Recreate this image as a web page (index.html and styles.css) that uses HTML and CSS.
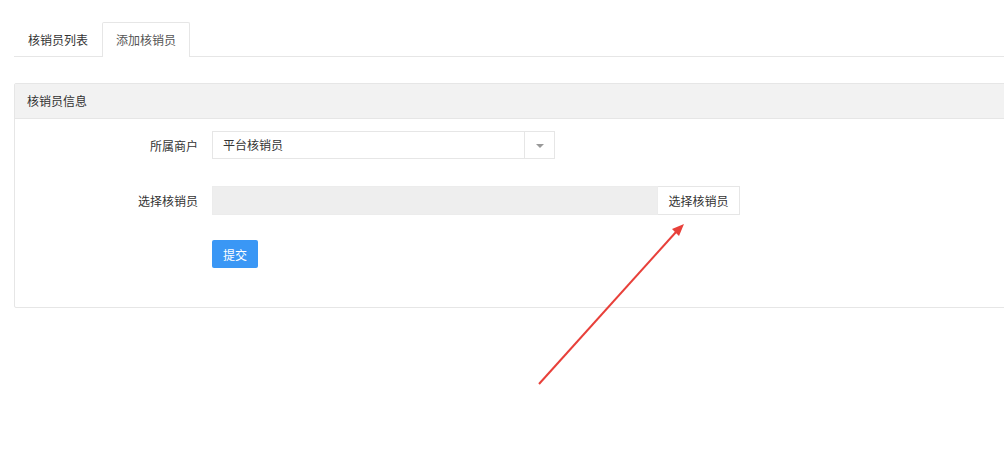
FILE: index.html
```html
<!DOCTYPE html>
<html lang="zh-CN">
<head>
    <meta charset="UTF-8">
    <meta name="viewport" content="width=device-width, initial-scale=1.0">
    <title>添加核销员</title>
    <link rel="stylesheet" href="styles.css">
</head>
<body>
    <div class="page">
        <ul class="tabs">
            <li class="tab">核销员列表</li>
            <li class="tab active">添加核销员</li>
        </ul>

        <div class="panel">
            <div class="panel-heading">核销员信息</div>
            <div class="panel-body">
                <div class="form-row">
                    <label class="form-label">所属商户</label>
                    <div class="select-box">
                        <span class="select-value">平台核销员</span>
                        <span class="select-arrow"><i class="caret"></i></span>
                    </div>
                </div>

                <div class="form-row row-picker">
                    <label class="form-label">选择核销员</label>
                    <div class="input-group">
                        <input class="input-readonly" type="text" readonly>
                        <button type="button" class="btn-addon">选择核销员</button>
                    </div>
                </div>

                <div class="form-row row-submit">
                    <span class="form-label"></span>
                    <button type="button" class="btn-primary">提交</button>
                </div>
            </div>
        </div>
    </div>

    <!-- annotation arrow -->
    <svg class="annotation" width="1004" height="450" viewBox="0 0 1004 450">
        <line x1="539" y1="384" x2="676" y2="232" stroke="#e8403a" stroke-width="2"/>
        <polygon points="684,224 672,229 679,236" fill="#e8403a"/>
    </svg>
</body>
</html>
```

FILE: styles.css
```css
body {
    margin: 0;
    font-family: "Noto Sans CJK SC", "Microsoft YaHei", sans-serif;
    font-size: 12px;
    color: #333;
    background-color: #fff;
    overflow: hidden;
    width: 1004px;
    height: 450px;
}

.page {
    padding: 22px 0 0 14px;
    width: 1010px;
}

.tabs {
    display: flex;
    margin: 0;
    padding: 0;
    list-style: none;
    border-bottom: 1px solid #e6e6e6;
}

.tab {
    height: 34px;
    line-height: 34px;
    padding: 0 13px;
    border: 1px solid transparent;
    border-bottom: none;
    margin-bottom: -1px;
    color: #333;
    border-radius: 2px 2px 0 0;
}

.tab.active {
    border-color: #e6e6e6;
    background-color: #fff;
    color: #555;
}

.panel {
    margin-top: 26px;
    border: 1px solid #e6e6e6;
    border-radius: 2px;
    background-color: #fff;
}

.panel-heading {
    height: 34px;
    line-height: 34px;
    padding-left: 12px;
    background-color: #f2f2f2;
    border-bottom: 1px solid #e6e6e6;
    color: #333;
}

.panel-body {
    padding: 12px 0 39px;
}

.form-row {
    display: flex;
    align-items: center;
    gap: 14px;
}

.row-picker {
    margin-top: 27px;
}

.row-submit {
    margin-top: 25px;
}

.form-label {
    width: 183px;
    text-align: right;
    color: #333;
}

.select-box {
    display: flex;
    width: 343px;
    height: 28px;
    border: 1px solid #e6e6e6;
    box-sizing: border-box;
}

.select-value {
    flex: 1;
    line-height: 26px;
    padding-left: 10px;
    color: #333;
}

.select-arrow {
    width: 29px;
    border-left: 1px solid #e6e6e6;
    display: flex;
    align-items: center;
    justify-content: center;
}

.caret {
    width: 0;
    height: 0;
    border-left: 4px solid transparent;
    border-right: 4px solid transparent;
    border-top: 4px solid #999;
    margin-top: 2px;
}

.input-group {
    display: flex;
    height: 29px;
}

.input-readonly {
    width: 446px;
    height: 29px;
    box-sizing: border-box;
    border: 1px solid #ececec;
    background-color: #eee;
    padding: 0;
    margin: 0;
    outline: none;
}

.btn-addon {
    width: 82px;
    height: 29px;
    box-sizing: border-box;
    border: 1px solid #e6e6e6;
    border-left: none;
    background-color: #fff;
    color: #333;
    font-family: inherit;
    font-size: 12px;
    padding: 0;
    margin: 0;
}

.btn-primary {
    width: 46px;
    height: 28px;
    border: none;
    border-radius: 2px;
    background-color: #3a97f5;
    color: #fff;
    font-family: inherit;
    font-size: 12px;
    padding: 0;
}

.annotation {
    position: absolute;
    top: 0;
    left: 0;
    pointer-events: none;
}
```
